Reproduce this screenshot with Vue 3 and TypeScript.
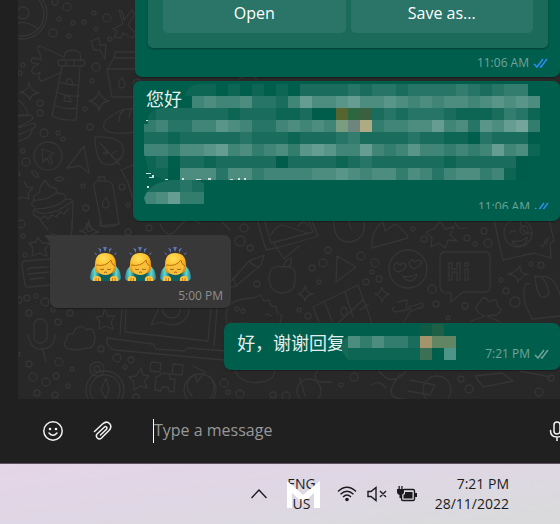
<script setup lang="ts">
import { ref } from 'vue'

interface Cell { x: number; y: number; fill: string }

const draft = ref('')

const dots: number[][] = [
  [55, 2, 3], [67, 7, 4], [94, 13, 2], [107, 18, 4], [59, 19, 2], [73, 23, 2], [84, 22, 2], [96, 29, 2],
  [53, 33, 4], [69, 36, 2], [110, 39, 2], [23, 65, 2], [20, 73, 2], [96, 67, 4], [92, 81, 2], [40, 103, 3],
  [40, 113, 3], [85, 109, 2], [90, 127, 3], [44, 133, 4], [58, 133, 2], [63, 139, 2], [23, 151, 2],
  [26, 162, 4], [18, 174, 2], [83, 186, 2], [122, 187, 3], [86, 208, 3], [128, 205, 2], [21, 224, 4],
  [23, 236, 2], [25, 255, 2], [128, 232, 3], [149, 228, 3], [19, 300, 3], [27, 298, 3], [36, 296, 2],
  [45, 302, 4], [29, 313, 3], [53, 310, 2], [70, 313, 3], [58, 322, 3], [101, 349, 3], [117, 358, 4],
  [131, 360, 3], [125, 367, 2], [18, 354, 2], [29, 364, 3], [59, 362, 4], [72, 369, 2], [33, 377, 4],
  [46, 382, 4], [56, 376, 3], [68, 386, 2], [37, 393, 3], [55, 395, 3], [224, 383, 4], [136, 397, 3],
  [244, 228, 4], [240, 241, 5], [250, 248, 3], [257, 284, 3], [328, 250, 3], [323, 263, 4], [312, 268, 3],
  [319, 282, 2], [361, 256, 4], [375, 263, 4], [372, 272, 2], [379, 279, 3], [366, 282, 3], [413, 229, 2],
  [424, 239, 3], [484, 231, 3], [467, 238, 3], [475, 244, 2], [488, 243, 4], [432, 289, 4], [436, 304, 3],
  [501, 280, 2], [506, 291, 3], [515, 302, 5], [531, 264, 2], [541, 265, 3], [299, 310, 2], [308, 316, 3],
  [465, 306, 3], [448, 318, 2], [228, 392, 2], [240, 394, 4], [273, 395, 3], [286, 396, 4], [354, 377, 4],
  [341, 385, 2], [461, 379, 3], [469, 389, 4], [551, 378, 3], [539, 392, 4],
]

function shade(level: number): string {
  const t = level / 9
  return `rgb(${Math.round(115 * t)}, ${Math.round(93 + 72 * t)}, ${Math.round(75 + 80 * t)})`
}

const accents: Record<string, string> = {
  a: '#56652f', b: '#2c673f', c: '#3b603f', d: '#7a9c80', e: '#6e857d', f: '#aeaa83',
  g: '#a4946c', h: '#628664', i: '#3b7055', j: '#4f9488', k: '#0e5c45', l: '#1f5f45',
}

function cells(rows: string[]): Cell[] {
  const out: Cell[] = []
  rows.forEach((row, r) => {
    row.split('').forEach((c, i) => {
      if (c === '.') return
      out.push({ x: i * 12, y: r * 12, fill: accents[c] ?? shade(Number(c)) })
    })
  })
  return out
}

const longMask = cells([
  '...111.1.1.1.2222323323333432344.',
  '....56556332586678667656566567676',
  '1222222122211200abc23233321112431',
  '4533557653356565def45566856376894',
  '221222223222122234222232211.32220',
  '554667856456478755854575545458561',
  '12.22122222022221232222221222220.',
  '11066636645555667656646535664510.',
  '22232',
  '56844',
])

const shortMask = cells(['......kl.', '646442ghh', '111111i.j'])
</script>

<template>
  <div class="screen">
    <div class="window">
      <aside class="rail"></aside>
      <main class="chat">
        <section class="thread">
          <svg class="wallpaper" viewBox="18 0 542 399" preserveAspectRatio="xMaxYMax slice" aria-hidden="true">
            <circle v-for="(d, i) in dots" :key="i" :cx="d[0]" :cy="d[1]" :r="d[2]" />
            <circle cx="22" cy="14" r="25" /><circle cx="22" cy="14" r="22" /><circle cx="23" cy="13" r="6" />
            <path d="M10 27q13-10 28 2" />
            <path d="M119 10q4 0 5 10l8-10 3 4-7 11 8 9-4 4-9-5-2 5-7-1 3-6-4-2 10-5z" />
            <path d="M91 41l8-3 1 7 6 0-1 14-5-9-6 0z" />
            <path d="M64 57l1-4q7-6 15 0l1 7 M60 60h22q4 0 3 3t-3 3H61q-3 0-3-3t2-3z M66 60v6M74 60v6 M62 67l-10 49q10 5 24 4l4-54 M59 82q10 4 20 3M57 92q10 5 22 4M54 105q12 5 23 3 M66 84q0-5 3-5t4 6z M64 101q0-5 3-5t4 6z" />
            <path d="M64 57L40 46q-5 0 0 8l1 6q-9-4-10 0t8 4q-9 4-7 8t8 0q-3 8 2 9l20-9" />
            <path d="M29 82q1 9 10 11q-8 0-9 7q-2-6-10-8q9-1 9-10z M99 91q2 8 10 10q-9 1-10 10q-1-8-10-10q8-1 10-10z" />
            <path d="M116 52h20M114 58l-7 11 5 28h26 M107 69h28M115 52l-1 6h22 M122 77q-7 10 0 11q6-1 0-11z" />
            <path d="M18 100q9 6 10 15H18M18 116l12-1q6 2 0 6l-12 6M18 128l16-5q4 3-2 6l-14 6M32 130q0 8-14 11" />
            <path d="M104 128q-3-8 18-18q14-3 14 1M104 128q4 8 31 4M119 121q0-7 4-10M129 118q0-7 4-10" />
            <circle cx="48" cy="156" r="14" /><path d="M42 149l12 4-5 3 4 7-3 1-3-6-4 4z" />
            <path d="M84 146L67 168l13-2 9 7z M95 137q32-1 28 17q-7 15-21 9q-7-8-7-26z M100 143l20 22M106 149v7M112 154l4-3M103 153l5 0M115 160l6-2" />
            <path d="M24 181l3 6 6 1-5 5 1 6-6-2-5 2M31 171q5-1 8 6q-5 1-8-6zM55 179q4-4 9 0q-5 4-9 0z" />
            <path d="M45 180l5 7q9 1 6 6q12 0 9 7q9-3 8 5l-1 25 M45 180q-7 9-5 12q-9 5-6 8q-5 5 1 7 M56 193q-10 8-22 7M65 200q-10 9-30 9q-5 6 3 8l10 13 M34 210q14 10 39-9 M40 219l5-3 3 3 4-4 4 2 4-5 4 2 5-6" />
            <path d="M99 181l-1-4h7l0 5M94 187q-1-7 7-6q10-2 12 5l6 38q-12 5-17 2z M106 197q-7 10 0 11q6-2 0-11z M121 170l14-6M121 170l7 13 5 16M86 223l7 7-5 2z" />
            <path d="M89 220q0 10 10 12q-9 1-10 9q-1-9-9-10q8-2 9-11z M100 220v6l19-2-1-5 M50 233l16 5q7 2 6-18 M38 237l4 6 8 0-5 6 2 7-8-3-7 3 1-8-4-5 7-1z M24 261l27-2M24 261q-2 1-2 4l3 20q1 3 4 2l21-2 M28 270q0-2 2-2l18-1M28 274l21-2M30 279l15-1" />
            <rect x="34" y="319" width="13" height="24" rx="6" /><path d="M28 335q3 16 15 14q12-2 12-14 M43 350l3 12" />
            <path d="M68 349q-7-4-1-10q-1-6 6-5q5-13 14-4q7-4 8 8q-1 11-8 10q-9 3-19 1z" />
            <path d="M104 309l4 7 7 0-4 6 2 7-7-3-7 3 1-7-4-5 7-1z" />
            <path d="M122 308l-2 27 M126 308l-1 24 83 9 3-33 M217 308l-3 38 M107 338l46 6 3 5 28 2 4-3 38 3M107 338q-1 10 8 12l109 10" />
            <path d="M159 308l-8 17 10-3q16 8 26-5q4-7-1-10M162 308q2 10 10 10t8-9" />
            <circle cx="105" cy="390" r="19" /><circle cx="105" cy="390" r="15" /><circle cx="97" cy="369" r="7" /><circle cx="97" cy="369" r="3" />
            <path d="M106 378l-5 12 5 9 3-10z M141 368l2 7 6 1-5 5 3 7-7-2-6 4 0-8-5-5 7-1z" />
            <path d="M151 362l10 1-1 9-10-1z M173 364l10 1-1 10-10-1z M159 376l3-3 8 1 0 5 5 0-1 13-5-1-1-4-6 0-1 4-6-1 1-13z" />
            <path d="M193 366l12 6-8 10-2-7q-14 8-3 21M210 376q8 12 0 23" />
            <path d="M256 216l10 34q20-4 52-14l-8-20M263 216l8 27 42-11-6-16M273 242l11 17 15-13M271 235q8-13 14-9l22 7M298 226q7-8 10 1" />
            <path d="M334 220q-1 22 16 22q17-3 14-22M349 220q1 9 3 10 M372 248l36-10q-3-8-13-14l-10 7-2-9q-12 8-11 26z" />
            <path d="M440 221l5 8 9-2-4 8 7 6-9-1-3 8-6-5-8 4 1-9-6-6 8-3z" />
            <path d="M494 220l9 40 31-7 17 5-1-14 4-3-5-21" /><circle cx="518" cy="233" r="14" /><circle cx="524" cy="230" r="4" /><path d="M510 233q2-4 6-1M512 241q8 2 15-4q0 9-7 9-6 0-8-5z M540 245l3 2 3-8M546 244l3-7" />
            <path d="M264 255l-15 6-21 24q3 3 8 1l25-21z M249 261q3 4 9 6M228 275q6 2 8 10" />
            <path d="M283 267q-13-3-14 10q0 15 13 16q14-1 13-14q2-15-12-12zM284 267q0-7 7-9q2 6-4 9" />
            <path d="M337 256l-1 26 20-15z M305 286q1 7 8 8q-7 1-8 7q-1-6-7-7q6-1 7-8zM382 287q1 6 7 7q-6 2-7 8q-1-6-7-8q6-1 7-7z" />
            <circle cx="408" cy="269" r="19" /><path d="M394 267q1-7 6-2q5-4 6 1q-2 5-8 6q-4-1-4-5zM409 263q2-6 6-1q5-4 7 1q-3 4-8 6q-4-2-5-6zM403 276q7 2 14-2q-2 7-7 7-5-1-7-5z" />
            <path d="M445 252h40q5 0 5 5v30q0 5-5 5h-22l-12 10v-9q-10 1-11-6v-30q0-5 5-5z M449 263v17h3v-8h5v8h3v-17h-3v6h-5v-6z M465 269h3v11h-3zM465 263h3v3h-3z" />
            <path d="M520 266q0 9 8 8q-8 3-10 8q-1-7-10-8q9-2 12-8z M535 276q11-1 14 18q-9 10-13-9zM530 284q-9-3-5 20l7 15M536 277q18-5 24 18M532 319l28-3" />
            <path d="M227 323q-6-25 27-25l6-3 4 6 5-1 2 6 5 1 1 6 5 2-2 8 M229 323q6 1 17 0M265 315q3-2 6 1" /><circle cx="237" cy="309" r="2" /><circle cx="243" cy="311" r="2" />
            <path d="M313 307l45-22 14 38M313 307l6 16M325 303l7 18M345 292l8 25M338 323l25-23M343 307q-5 5 2 10q5-9-2-10z M360 310l9-6" />
            <path d="M397 302l10-2-1 8 16-5q4 5-4 5l-8 4-7 11M394 307q-4 3 2 5l15-3" />
            <path d="M485 316q-15-6-5-14q4-9 9 0q9-6 8 4q8 4-1 9l-9 1 13 6M485 316l-14 5" />
            <path d="M235 371q7 14 25 11q14-1 15-12M318 370q-7 8 2 12h12M379 371q13 17 27 0M400 375q-20 24 5 24M475 376l27-3 11 8-30 6zM520 371l30 6M410 380l25 5-5 10-22-4M300 378l5 18M372 385q7-6 14 3" />
            <circle cx="200" cy="390" r="16" /><circle cx="309" cy="391" r="12" /><circle cx="437" cy="390" r="14" />
            <path d="M140 80q-5-2-7 3M230 230l-8-8M160 224q8 18 18 4t22-4M520 221q2 14 12 12M239 79q10-6 18 0M455 222q3 10 12 5" />
          </svg>

          <div class="messages">
            <article class="bubble out file">
              <div class="card">
                <button type="button">Open</button>
                <button type="button">Save as...</button>
              </div>
              <div class="stamp read">
                <time>11:06 AM</time>
                <svg viewBox="0 0 15 10"><path d="M1 6l3 3 6-8M7 8l1 1 6-8" /></svg>
              </div>
            </article>

            <article class="bubble out long">
              <p>您好</p>
              <svg class="mask" viewBox="0 0 396 125" aria-hidden="true">
                <clipPath id="soft">
                  <path d="M41 12Q42 2 54 0H396V84H384V96H22Q3 92 3 80L0 70V40H4Q2 25 18 24H48L41 18ZM0 114Q6 98 27 96H52L60 99V120H2Z" />
                </clipPath>
                <g clip-path="url(#soft)" shape-rendering="crispEdges">
                  <rect v-for="(c, i) in longMask" :key="i" :x="c.x" :y="c.y" width="12" height="12" :fill="c.fill" />
                </g>
                <path class="scrap" d="M2 36h2v1h-2zM2 89h5v1h-5zM8 91h2v3h-5v-1h3zM21 95h3v1h-3zM38 94h2v2h-2zM52 95h5v1h-5zM64 94h3v2h-3zM86 95h3v1h-3zM94 94h2v2h-2zM100 94h2v2h-2zM3 102h2v2h-2z" />
              </svg>
              <div class="stamp read">
                <time>11:06 AM</time>
                <svg viewBox="0 0 15 10"><path d="M1 6l3 3 6-8M7 8l1 1 6-8" /></svg>
              </div>
            </article>

            <article class="bubble in">
              <svg class="tail" viewBox="0 0 8 10" aria-hidden="true"><path d="M0 0h8v10L1 2z" /></svg>
              <div class="emojis">
                <svg v-for="n in 3" :key="n" viewBox="0 0 31 34" role="img" aria-label="🙇‍♀️">
                  <defs>
                    <radialGradient id="hair" cx=".4" cy=".25" r=".8"><stop offset="0" stop-color="#ffe05a" /><stop offset=".5" stop-color="#fdbd2c" /><stop offset="1" stop-color="#e08a10" /></radialGradient>
                    <linearGradient id="sleeve"><stop offset="0" stop-color="#2a7f98" /><stop offset=".16" stop-color="#63dccb" /><stop offset=".32" stop-color="#0d5f60" /><stop offset=".68" stop-color="#0d5f60" /><stop offset=".84" stop-color="#63dccb" /><stop offset="1" stop-color="#2a7f98" /></linearGradient>
                  </defs>
                  <path d="M4 5l3 2-1 1zM8 1l3 1 0 4zM13 0h4l-2 5zM22 1l-3 1 0 4zM27 5l-3 2 1 1z" fill="#5c76b8" />
                  <path d="M7 18Q1 21 0 30q0 4 4 4h23q4 0 4-4q-1-9-7-12z" fill="url(#sleeve)" />
                  <path d="M15 6Q5 6 5 18q-1 5 1 7q9 5 18 0q3-2 2-7Q26 6 15 6z" fill="url(#hair)" />
                  <path d="M7 19q9 1 14-5q0 4 3 5q-1 9-8.500 9T7 19z" fill="#f8c03a" />
                  <path d="M6 18q10 2 15-5q0 4 4 6" fill="none" stroke="#b9700f" />
                  <path d="M10 22q2 1.500 4 0M17 22q2 1.500 4 0M14 25.500q1.500-1 3 0" fill="none" stroke="#8a4c12" stroke-width=".8" />
                  <path d="M3 34q-1-5 4-5t4 5zM20 34q-1-5 4-5t4 5z" fill="#fdc13c" />
                  <path d="M6 31v3M8.500 31v3M22.500 31v3M25 31v3" stroke="#b96f12" stroke-width=".8" fill="none" />
                </svg>
              </div>
              <div class="stamp"><time>5:00 PM</time></div>
            </article>

            <article class="bubble out reply">
              <p>好，谢谢回复</p>
              <svg class="mask" viewBox="0 0 115 47" aria-hidden="true">
                <path d="M7 13Q-2 20 1 28L7 37z" fill="#166a58" />
                <g transform="translate(7 1)" shape-rendering="crispEdges">
                  <rect v-for="(c, i) in shortMask" :key="i" :x="c.x" :y="c.y" width="12" height="12" :fill="c.fill" />
                </g>
              </svg>
              <div class="stamp">
                <time>7:21 PM</time>
                <svg viewBox="0 0 15 10"><path d="M1 6l3 3 6-8M7 8l1 1 6-8" /></svg>
              </div>
            </article>
          </div>
        </section>

        <form class="composer" @submit.prevent>
          <button type="button" aria-label="Emoji">
            <svg viewBox="0 0 20 20"><circle cx="10" cy="10" r="9.2" /><path d="M6 12q4 4.500 8 0" /><circle class="eye" cx="7" cy="8" r="1.300" /><circle class="eye" cx="13" cy="8" r="1.300" /></svg>
          </button>
          <button type="button" aria-label="Attach">
            <svg viewBox="0 0 20 20"><path d="M1.500 10.500L9.500 3q4-3.500 7 -.5q3 3.200-.5 7L8.500 17q-2.200 2-4.200 0q-2-2.200 0-4.200L11.500 6q1-.8 2 0q.9 1.100 0 2.200L7.500 14" /></svg>
          </button>
          <input v-model="draft" type="text" placeholder="Type a message" aria-label="Type a message" />
          <button type="button" class="mic" aria-label="Voice message">
            <svg viewBox="0 0 20 20"><rect x="7" y="1" width="6" height="12" rx="3" /><path d="M3.500 9.500q0 6.500 6.500 6.500t6.500-6.500M10 16v4" /></svg>
          </button>
        </form>
      </main>
    </div>

    <footer class="taskbar">
      <button type="button" aria-label="Show hidden icons">
        <svg width="16" height="10" viewBox="0 0 16 10"><path d="M0.500 9L8 1l7.500 8" /></svg>
      </button>
      <div class="lang">
        <span>ENG</span>
        <svg viewBox="0 0 33 27" aria-hidden="true"><path d="M0 0L5 4L16 14L28 4L33 0V27H27V12L16 22L5 12V27H0z" /></svg>
        <span class="region">US</span>
      </div>
      <div class="tray">
        <svg width="20" height="16" viewBox="0 0 20 16"><path d="M1 5.500q9-8.500 18 0M3.500 8.300q6.500-6.300 13 0M6 11q4-4 8 0" /><circle class="solid" cx="10" cy="13.500" r="1.800" /></svg>
        <svg width="20" height="16" viewBox="0 0 20 16"><path d="M1 5.500h3l5-4v13l-5-4H1zM13 5l6 6M19 5l-6 6" /></svg>
        <svg width="20" height="16" viewBox="0 0 20 16"><path d="M7 3.500h9q1.500 0 1.500 1.500v8q0 1.500-1.500 1.500H6q-1.500 0-1.500-1.500V9" /><path class="solid" d="M8 6h7.500v6.500H6.500V9L8 8zM18 7h2v4h-2zM0 3h7v3q0 2.500-2.500 3v3h-2V9Q0 8.500 0 6zM1.500 0h1.300v3H1.500zM4.300 0h1.300v3H4.300z" /></svg>
      </div>
      <div class="clock"><span>7:21 PM</span><span>28/11/2022</span></div>
    </footer>
  </div>
</template>

<style>
body {
  margin: 0;
}
</style>

<style scoped>
.screen {
  display: flex;
  flex-direction: column;
  height: 100vh;
  overflow: hidden;
  font-family: "Open Sans", "Noto Sans CJK SC", sans-serif;
  background: #202020;
}
button {
  padding: 0;
  border: 0;
  background: none;
  color: inherit;
  font: inherit;
}
svg {
  display: block;
}
.window {
  display: flex;
  flex: 1;
  min-height: 0;
}
.rail {
  width: 18px;
  background: #202020;
}
.chat {
  display: flex;
  flex: 1;
  flex-direction: column;
  min-width: 0;
}
.thread {
  position: relative;
  display: flex;
  flex: 1;
  flex-direction: column;
  justify-content: flex-end;
  min-height: 0;
  overflow: hidden;
  background: #282828;
}
.wallpaper {
  position: absolute;
  inset: 0;
  width: 100%;
  height: 100%;
  fill: none;
  stroke: #353535;
  stroke-width: 1.3;
  stroke-linejoin: round;
  stroke-linecap: round;
}
.messages {
  position: relative;
  display: flex;
  flex-direction: column;
  align-items: flex-end;
  padding-bottom: 29px;
}
.bubble {
  box-sizing: border-box;
  border-radius: 7px;
  box-shadow: 0 1px 1px rgba(0, 0, 0, 0.3);
}
.bubble p {
  margin: 0;
  color: #e4efed;
  font-size: 18px;
  line-height: 24px;
}
.out {
  background: #005e4c;
}
.in {
  position: relative;
  align-self: flex-start;
  margin: 14px 0 15px 32px;
  padding: 12px 8px 4px;
  background: #383838;
}
.tail {
  position: absolute;
  top: 0;
  left: -8px;
  width: 14px;
  height: 11px;
  fill: #383838;
}
.stamp {
  display: flex;
  align-items: center;
  justify-content: flex-end;
  gap: 4px;
  color: #8f8f8f;
  font-size: 12px;
  line-height: 16px;
}
.out .stamp {
  color: #73a399;
}
.stamp svg {
  width: 15px;
  height: 10px;
  fill: none;
  stroke: #73a399;
  stroke-width: 1.5;
}
.stamp.read svg {
  stroke: #2f8df0;
}
.file {
  margin-bottom: 4px;
  padding: 0 12px 6px 13px;
}
.card {
  display: flex;
  gap: 5px;
  box-sizing: border-box;
  width: 400px;
  margin-bottom: 7px;
  padding: 15px;
  border-radius: 5px;
  background: #1b6b5b;
  box-shadow: 0 1px 2px rgba(0, 0, 0, 0.35);
}
.card button {
  flex: 1;
  height: 40px;
  border-radius: 5px;
  background: #2a7567;
  color: #fff;
  font-size: 16px;
}
.long {
  display: grid;
  padding: 3px 11px 6px;
}
.long > * {
  grid-area: 1 / 1;
}
.long p {
  padding: 3px 0 0 2px;
}
.long .mask {
  width: 396px;
  height: 125px;
  margin: 0 9px 6px 0;
}
.long .stamp {
  position: relative;
  align-self: end;
  justify-self: end;
}
.long .stamp::after {
  content: "";
  position: absolute;
  inset: auto 0 0;
  height: 6px;
  background: #005e4c;
}
.scrap {
  fill: #cfe2de;
}
.emojis {
  display: flex;
  gap: 4px;
  margin-bottom: 7px;
  padding: 0 32px;
}
.emojis svg {
  width: 31px;
  height: 34px;
}
.reply {
  display: flex;
  align-items: center;
  padding: 0 11px 0 13px;
}
.reply p {
  padding-bottom: 8px;
}
.reply .mask {
  width: 115px;
  height: 47px;
  margin: 0 29px 0 -4px;
}
.reply .stamp {
  align-self: flex-end;
  padding-bottom: 8px;
}
.composer {
  display: flex;
  align-items: center;
  height: 64px;
  padding-left: 25px;
  overflow: hidden;
  background: #202020;
}
.composer button {
  flex: none;
  width: 20px;
  height: 20px;
  margin-right: 30px;
}
.composer svg {
  width: 20px;
  height: 20px;
  fill: none;
  stroke: #f2f2f2;
  stroke-width: 1.5;
  stroke-linecap: round;
}
.composer .eye {
  fill: #f2f2f2;
  stroke: none;
}
.composer input {
  box-sizing: border-box;
  flex: 1;
  min-width: 0;
  height: 24px;
  margin-left: 10px;
  padding: 0 0 2px;
  border: 0;
  border-left: 1px solid #fff;
  outline: 0;
  background: none;
  color: #fff;
  font: inherit;
  font-size: 16px;
}
.composer input::placeholder {
  color: #989898;
  opacity: 1;
}
.composer .mic {
  margin-right: -7px;
}
.taskbar {
  display: flex;
  align-items: center;
  justify-content: flex-end;
  box-sizing: border-box;
  height: 61px;
  padding-right: 51px;
  border-top: 1px solid #5c5263;
  background: linear-gradient(172deg, #e5d5e6 0%, #dfd7e5 45%, #dadadc 90%);
  color: #1b1b1d;
  font-size: 14px;
  line-height: 20px;
}
.taskbar svg {
  fill: none;
  stroke: #1b1b1d;
  stroke-width: 1.4;
}
.taskbar .solid {
  fill: #1b1b1d;
  stroke: none;
}
.lang {
  position: relative;
  display: flex;
  flex-direction: column;
  align-items: center;
  margin: 0 21px 0 20px;
}
.taskbar .lang svg {
  position: absolute;
  top: 7px;
  left: 0;
  width: 33px;
  height: 27px;
  fill: #fff;
  stroke: none;
}
.region {
  position: relative;
}
.tray {
  display: flex;
  gap: 10px;
  margin-right: 18px;
}
.clock {
  display: flex;
  flex-direction: column;
  align-items: flex-end;
}
</style>
